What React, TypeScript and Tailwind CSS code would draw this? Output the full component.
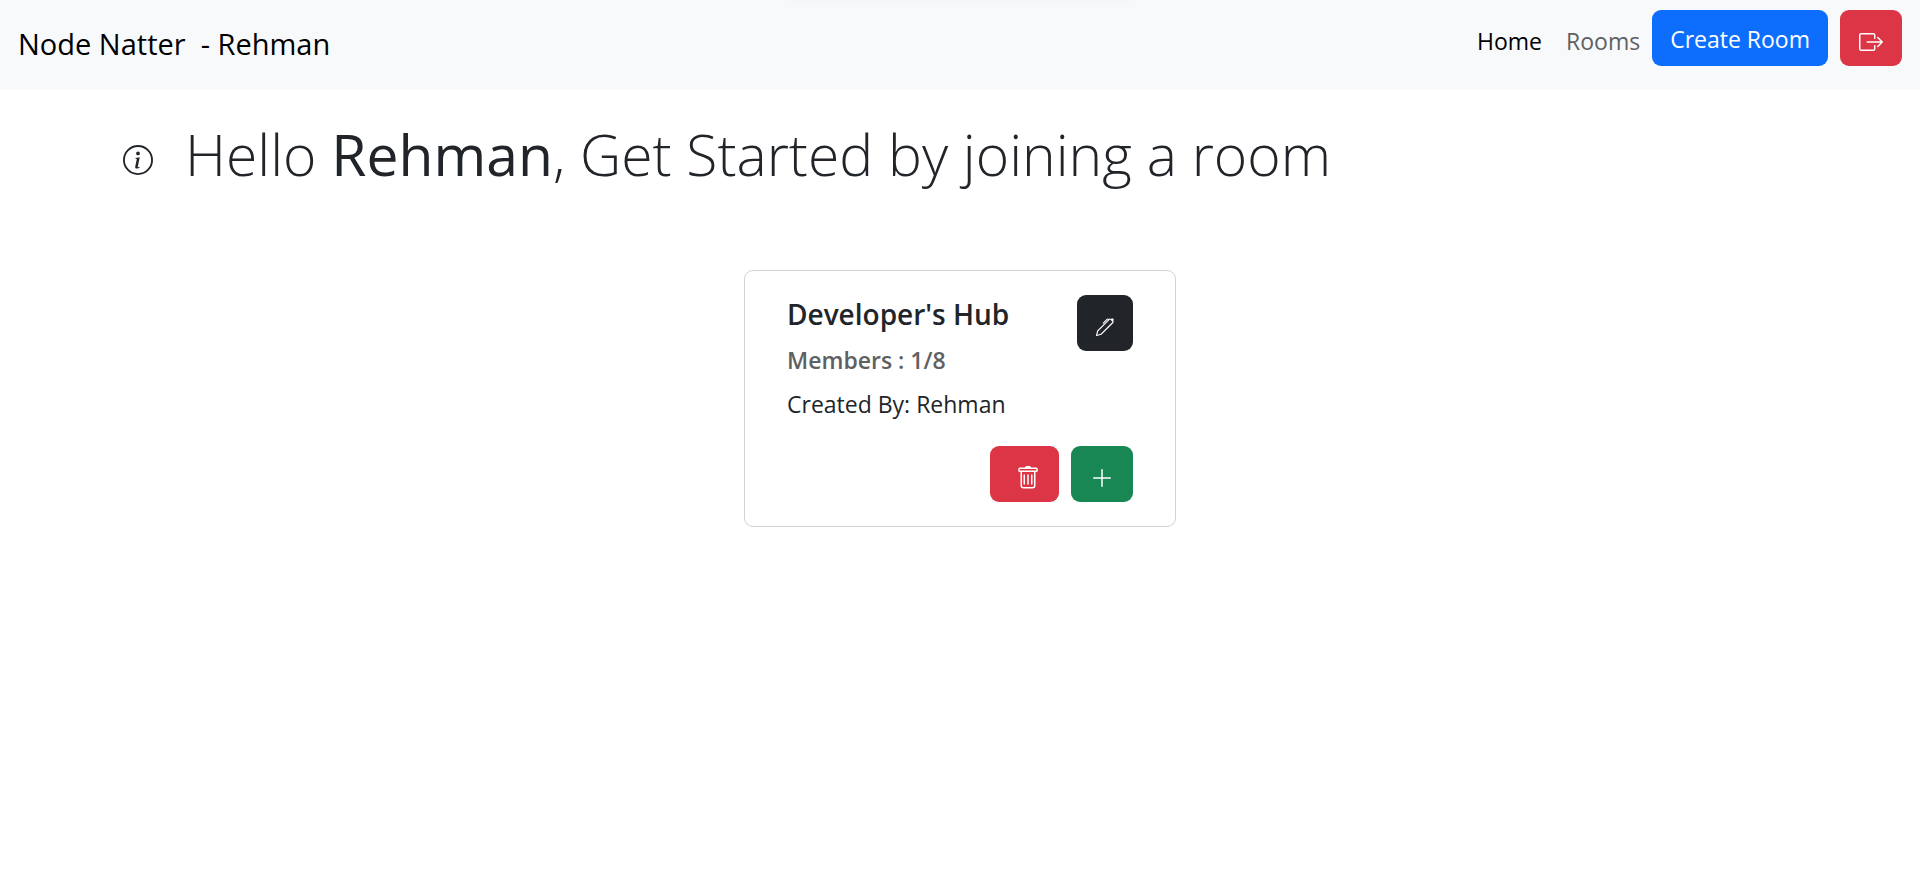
import type { ReactNode } from "react";
import {
  BsBoxArrowRight,
  BsInfoCircle,
  BsPen,
  BsPlusLg,
  BsTrash,
} from "react-icons/bs";

interface Room {
  name: string;
  members: number;
  capacity: number;
  createdBy: string;
}

interface IconButtonProps {
  label: string;
  className: string;
  children: ReactNode;
}

const user = "Rehman";

const rooms: Room[] = [
  { name: "Developer's Hub", members: 1, capacity: 8, createdBy: "Rehman" },
];

function IconButton({ label, className, children }: IconButtonProps) {
  return (
    <button
      type="button"
      aria-label={label}
      className={`flex h-14 shrink-0 items-center rounded-[9px] pt-2 text-2xl text-white ${className}`}
    >
      {children}
    </button>
  );
}

function Navbar() {
  return (
    <nav className="relative flex items-start justify-between bg-[#f8f9fb] px-[18px] pt-2.5 pb-6">
      <div className="absolute inset-x-0 top-0 mx-auto h-1 w-[336px] bg-linear-to-b from-black/3 to-transparent blur-[2px]" />
      <a href="#" className="mt-3 text-[29px] leading-11 whitespace-pre text-black">
        {`Node Natter  - ${user}`}
      </a>
      <div className="flex items-start gap-3">
        <a href="#" className="mt-3 mr-3 text-[23px] leading-[38px] text-black">
          Home
        </a>
        <a href="#" className="mt-3 text-[23px] leading-[38px] text-[#5f6062]">
          Rooms
        </a>
        <button
          type="button"
          className="h-14 rounded-[9px] bg-[#0d6efd] px-[18px] pt-0.5 text-[23px] text-white"
        >
          Create Room
        </button>
        <IconButton label="Log out" className="bg-[#dc3545] px-[19px]">
          <BsBoxArrowRight />
        </IconButton>
      </div>
    </nav>
  );
}

function RoomCard({ room }: { room: Room }) {
  return (
    <article className="w-[432px] rounded-[9px] border border-[#d2d2d2] bg-white px-[42px] py-6">
      <div className="flex items-start justify-between">
        <div>
          <h2 className="text-[28px] leading-[38px] font-semibold">{room.name}</h2>
          <p className="mt-2.5 text-[23px] leading-[34px] font-semibold text-[#5f6062]">
            Members : {room.members}/{room.capacity}
          </p>
          <p className="mt-2.5 text-[23px] leading-[35px]">Created By: {room.createdBy}</p>
        </div>
        <IconButton label="Edit room" className="bg-[#212529] px-[19px]">
          <BsPen className="size-[18px]" />
        </IconButton>
      </div>
      <div className="mt-6 flex justify-end gap-3">
        <IconButton label="Delete room" className="bg-[#dc3545] pr-[19px] pl-[26px]">
          <BsTrash />
        </IconButton>
        <IconButton label="Join room" className="bg-[#198754] px-[19px]">
          <BsPlusLg />
        </IconButton>
      </div>
    </article>
  );
}

export default function App() {
  return (
    <div className="min-h-screen bg-white font-['Open_Sans','Noto_Sans',sans-serif] text-[#212529]">
      <Navbar />
      <main>
        <header className="flex items-center gap-8 px-[123px] pt-7">
          <BsInfoCircle className="mt-3 size-[30px] shrink-0" />
          <h1 className="text-[57px] leading-[72px] font-light">
            Hello <b className="font-medium">{user}</b>, Get Started by joining a room
          </h1>
        </header>
        <section className="mt-20 flex flex-wrap justify-center gap-6">
          {rooms.map((room) => (
            <RoomCard key={room.name} room={room} />
          ))}
        </section>
      </main>
    </div>
  );
}
